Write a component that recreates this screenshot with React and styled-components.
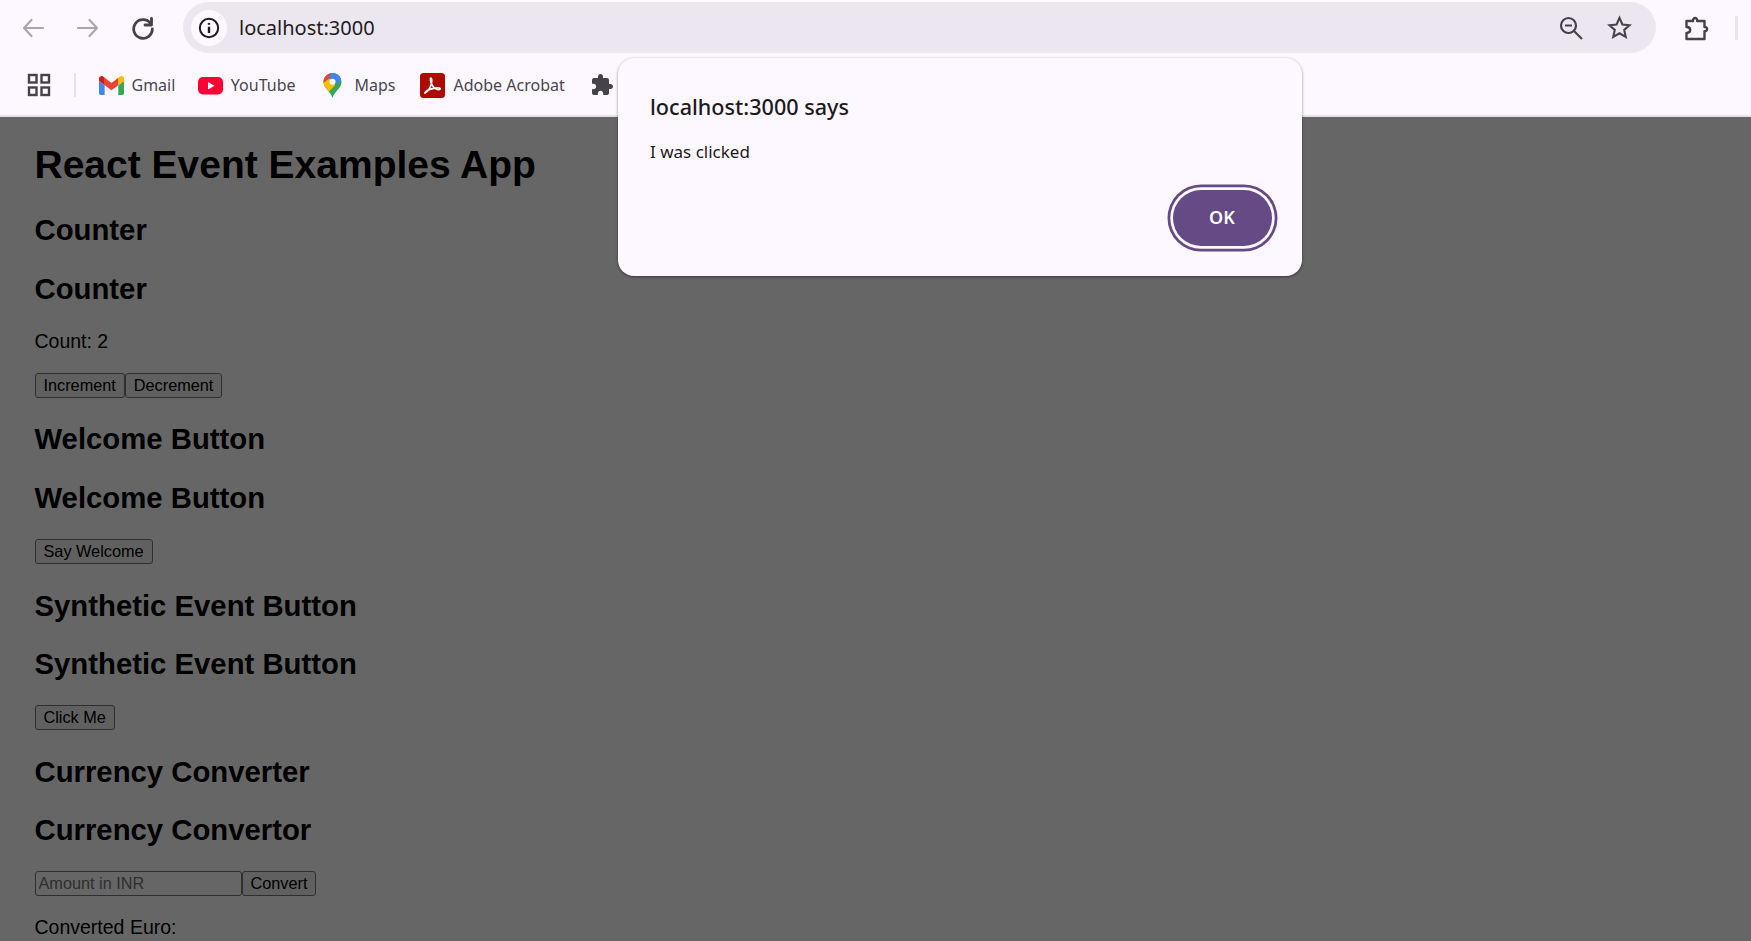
import styled, { createGlobalStyle } from "styled-components";

const GlobalStyle = createGlobalStyle`
  html, body {
    margin: 0;
    height: 100%;
    overflow: hidden;
    background: #fff;
  }
  #root {
    height: 100%;
  }
`;

const Wrap = styled.div`
  position: relative;
  height: 941px;
  display: flex;
  flex-direction: column;
  overflow: hidden;
`;

const Chrome = styled.header`
  height: 115px;
  flex-shrink: 0;
  background: #fdf8ff;
  border-bottom: 2px solid #e5e0e9;
  font-family: "Noto Sans", sans-serif;
  color: #46424c;
`;

const Toolbar = styled.div`
  height: 55px;
  display: flex;
  align-items: flex-start;
  padding-top: 2px;
  box-sizing: border-box;
`;

const NavGroup = styled.div`
  width: 183px;
  height: 51px;
  flex-shrink: 0;
  display: flex;
  align-items: center;
  gap: 25px;
  padding-left: 18px;
  box-sizing: border-box;
`;

const NavIcon = styled.svg`
  width: 30px;
  height: 30px;
  flex-shrink: 0;
  color: ${(p) => (p.$off ? "#a9a5ae" : "#46424c")};
`;

const AddressBar = styled.div`
  width: 1473px;
  height: 51px;
  flex-shrink: 0;
  display: flex;
  align-items: center;
  padding: 0 24px 0 8px;
  box-sizing: border-box;
  background: #ece6f0;
  border-radius: 26px;
`;

const InfoBadge = styled.div`
  width: 36px;
  height: 36px;
  border-radius: 50%;
  background: #fdf8ff;
  display: flex;
  align-items: center;
  justify-content: center;
  flex-shrink: 0;
`;

const Url = styled.span`
  margin-left: 12px;
  font-size: 20px;
  color: #1d1b20;
  flex: 1;
`;

const BarIcons = styled.div`
  display: flex;
  align-items: center;
  gap: 24px;
`;

const ToolbarEnd = styled.div`
  display: flex;
  align-items: center;
  height: 51px;
  padding-left: 28px;
`;

const ProfileLine = styled.div`
  width: 3px;
  height: 24px;
  margin-left: 25px;
  background: #eae1fb;
`;

const BookmarkBar = styled.nav`
  height: 60px;
  display: flex;
  align-items: center;
  padding-left: 27px;
  gap: 23px;
`;

const AppsDivider = styled.div`
  width: 2px;
  height: 24px;
  background: #e6dff3;
`;

const Bookmark = styled.div`
  display: flex;
  align-items: center;
  gap: ${(p) => p.$gap || "7.5px"};
  padding-right: ${(p) => p.$pad || "0"};
  font-size: 16px;
  color: #4a4650;
  white-space: nowrap;
`;

const BookmarkIcon = styled.svg`
  width: 25px;
  height: 25px;
  flex-shrink: 0;
`;

const Page = styled.main`
  position: relative;
  flex: 1;
  padding: 25px 0 0 34.5px;
  overflow: hidden;
  font-family: "Liberation Sans", Arial, sans-serif;
  color: #000;
`;

const Scrim = styled.div`
  position: absolute;
  inset: 0;
  background: rgba(0, 0, 0, 0.6);
`;

const Title = styled.h1`
  margin: 0 0 26.3px;
  font-size: 39px;
  line-height: 45px;
  font-weight: 700;
`;

const Heading = styled.h2`
  margin: 0 0 24.8px;
  font-size: 29.3px;
  font-weight: 700;
  line-height: 33.5px;
`;

const Text = styled.p`
  margin: 0 0 20px;
  font-size: 19.5px;
  line-height: 23px;
`;

const Row = styled.div`
  display: flex;
  margin-bottom: ${(p) => p.$gap || "24.6px"};
`;

const Button = styled.button`
  height: 25px;
  padding: 0 8px;
  font-family: "Liberation Sans", Arial, sans-serif;
  font-size: 16.27px;
  color: #000;
  background: #efefef;
  border: 1px solid #767676;
  border-radius: 3px;
`;

const AmountInput = styled.input`
  width: 207px;
  height: 25px;
  padding: 0 3px;
  box-sizing: border-box;
  font-family: "Liberation Sans", Arial, sans-serif;
  font-size: 16.27px;
  background: #fff;
  border: 1px solid #767676;
  border-radius: 3px;
  &::placeholder {
    color: #757575;
  }
`;

const Dialog = styled.div`
  position: absolute;
  left: 618px;
  top: 58px;
  width: 684px;
  height: 218px;
  box-sizing: border-box;
  padding: 35px 25px 25px 32px;
  display: flex;
  flex-direction: column;
  background: #fdf8ff;
  border-radius: 16px;
  box-shadow: 0 1px 3px rgba(0, 0, 0, 0.45);
  font-family: "Noto Sans", sans-serif;
  color: #1d1b20;
`;

const DialogTitle = styled.div`
  font-size: 21.6px;
  font-weight: 500;
  line-height: 28px;
`;

const DialogText = styled.div`
  margin-top: 19px;
  font-size: 17px;
  line-height: 24px;
`;

const DialogActions = styled.div`
  margin-top: auto;
  display: flex;
  justify-content: flex-end;
`;

const OkButton = styled.button`
  width: 99px;
  height: 56px;
  margin: 5.5px;
  padding: 0 0 2px;
  border: none;
  border-radius: 28px;
  background: #654a86;
  color: #fff;
  font-family: "Noto Sans", sans-serif;
  font-size: 18px;
  font-weight: 600;
  box-shadow: 0 0 0 2.75px #fdf8ff, 0 0 0 5.5px #654a86;
`;

const Stroke = { fill: "none", stroke: "currentColor", strokeWidth: 2.2, strokeLinecap: "round", strokeLinejoin: "round" };

const Gmail = () => (
  <BookmarkIcon viewBox="0 -3 24 24">
    <path fill="#4285F4" d="M1.6 18h3.8V8.7L0 4.6v11.8C0 17.3.7 18 1.6 18z" />
    <path fill="#34A853" d="M18.5 18h3.8c.9 0 1.7-.7 1.7-1.6V4.6l-5.5 4.1z" />
    <path fill="#FBBC04" d="M18.5 1.6v7.1L24 4.6V2.4c0-2-2.3-3.2-3.9-2z" />
    <path fill="#EA4335" d="M5.5 8.7V1.6L12 6.5l6.5-4.9v7.1L12 13.6z" />
    <path fill="#C5221F" d="M0 2.4v2.2l5.5 4.1V1.6L3.9.4C2.3-.8 0 .4 0 2.4z" />
  </BookmarkIcon>
);

const YouTube = () => (
  <BookmarkIcon viewBox="0 0 25 25">
    <rect x="0" y="4" width="25" height="17.5" rx="5" fill="#ff0033" />
    <path fill="#fff" d="M10 9l6.5 3.7L10 16.5z" />
  </BookmarkIcon>
);

const Maps = () => (
  <BookmarkIcon viewBox="0 0 25 25">
    <defs>
      <clipPath id="maps-pin">
        <path d="M12.5 0C7.5 0 3.5 4 3.5 9c0 6.5 7 9 9 16 2-7 9-9.500 9-16 0-5-4-9-9-9z" />
      </clipPath>
    </defs>
    <g clipPath="url(#maps-pin)">
      <rect width="25" height="25" fill="#34a853" />
      <polygon fill="#fbbc04" points="3,10 9,5.500 15.500,12 8,19.500 3,19.500" />
      <polygon fill="#ea4335" points="3,0 11,0 9,5.500 3,10" />
      <polygon fill="#4285f4" points="11,0 22,0 22,6 15.500,12 9,5.500" />
    </g>
    <circle cx="12.500" cy="8.800" r="3" fill="#fff" />
  </BookmarkIcon>
);

const Acrobat = () => (
  <BookmarkIcon viewBox="0 0 25 25">
    <rect width="25" height="25" rx="3.500" fill="#ad0b00" />
    <path
      fill="none"
      stroke="#fff"
      strokeWidth="1.600"
      strokeLinejoin="round"
      d="M5 20c3-1.500 5.500-6 6.500-10 .4-1.800.5-5-.6-5-1 0-.5 3.500 1 6.500 1.500 3 3.500 4.500 5.500 5 1.500.3 3 0 2.700-.9-.3-.9-3-.9-6.500-.2-3.500.7-6.700 2-8 3.500-.7.8-1 1.400-.6 1.100z"
    />
  </BookmarkIcon>
);

export default function App() {
  return (
    <Wrap>
      <GlobalStyle />
      <Chrome>
        <Toolbar>
          <NavGroup>
            <NavIcon $off viewBox="0 0 30 30" {...Stroke}>
              <path d="M25 15H6M13.500 7L6 15l7.500 8" />
            </NavIcon>
            <NavIcon $off viewBox="0 0 30 30" {...Stroke}>
              <path d="M5 15h19M16.500 7l7.500 8-7.500 8" />
            </NavIcon>
            <NavIcon viewBox="0 0 30 30" {...Stroke} strokeWidth="2.800">
              <path d="M22.500 10.500A9.300 9.300 0 1 0 24.300 16" />
              <path d="M23.500 5.500v6.500H17" />
            </NavIcon>
          </NavGroup>
          <AddressBar>
            <InfoBadge>
              <svg width="22" height="22" viewBox="0 0 24 24" fill="none" stroke="#1d1b20" strokeWidth="2.200">
                <circle cx="12" cy="12" r="10" />
                <path d="M12 10.500v7M12 6.500v2" strokeWidth="2.600" />
              </svg>
            </InfoBadge>
            <Url>localhost:3000</Url>
            <BarIcons>
              <svg width="24" height="24" viewBox="0 0 24 24" fill="none" stroke="#46424c" strokeWidth="2.200">
                <circle cx="9.500" cy="9.500" r="7.500" />
                <path d="M15 15l8 8M6 9.500h7" />
              </svg>
              <svg width="25" height="25" viewBox="0 0 24 24" fill="none" stroke="#46424c" strokeWidth="2" strokeLinejoin="miter">
                <path d="M12 2.800l2.800 6.300 6.800.7-5.100 4.500 1.500 6.700-6-3.500-6 3.500 1.500-6.700-5.100-4.500 6.800-.7z" />
              </svg>
            </BarIcons>
          </AddressBar>
          <ToolbarEnd>
            <svg width="26" height="26" viewBox="0 0 26 26" fill="none" stroke="#46424c" strokeWidth="2.400" strokeLinejoin="round">
              <path d="M2.500 6h6.500c-.4-4 4.600-4 4.200 0h7.300v6c3.500-.4 3.500 4.600 0 4.200V24H2.500v-6c3-.3 3.700-1.200 3.700-3s-1-3-3.700-3z" />
            </svg>
            <ProfileLine />
          </ToolbarEnd>
        </Toolbar>
        <BookmarkBar>
          <svg width="24" height="24" viewBox="0 0 24 24" fill="none" stroke="#46424c" strokeWidth="2.400">
            <rect x="2" y="2" width="7.500" height="7.500" />
            <rect x="14.500" y="2" width="7.500" height="7.500" />
            <rect x="2" y="14.500" width="7.500" height="7.500" />
            <rect x="14.500" y="14.500" width="7.500" height="7.500" />
          </svg>
          <AppsDivider />
          <Bookmark>
            <Gmail />
            Gmail
          </Bookmark>
          <Bookmark $pad="1px">
            <YouTube />
            YouTube
          </Bookmark>
          <Bookmark $gap="10px" $pad="1px">
            <Maps />
            Maps
          </Bookmark>
          <Bookmark $gap="9px" $pad="2px">
            <Acrobat />
            Adobe Acrobat
          </Bookmark>
          <svg width="24" height="24" viewBox="0 0 24 24" fill="#46424c">
            <path d="M20.500 11H19V7c0-1.100-.9-2-2-2h-4V3.500C13 2.120 11.880 1 10.500 1S8 2.120 8 3.500V5H4c-1.100 0-1.990.9-1.990 2v3.800H3.500c1.490 0 2.700 1.210 2.700 2.700s-1.210 2.700-2.700 2.700H2V20c0 1.100.9 2 2 2h3.800v-1.500c0-1.490 1.210-2.700 2.700-2.700 1.490 0 2.700 1.210 2.700 2.700V22H17c1.100 0 2-.9 2-2v-4h1.500c1.380 0 2.500-1.120 2.500-2.500S21.880 11 20.500 11z" />
          </svg>
        </BookmarkBar>
      </Chrome>

      <Page>
        <Title>React Event Examples App</Title>
        <Heading>Counter</Heading>
        <Heading>Counter</Heading>
        <Text>Count: 2</Text>
        <Row>
          <Button>Increment</Button>
          <Button>Decrement</Button>
        </Row>
        <Heading>Welcome Button</Heading>
        <Heading>Welcome Button</Heading>
        <Row>
          <Button>Say Welcome</Button>
        </Row>
        <Heading>Synthetic Event Button</Heading>
        <Heading>Synthetic Event Button</Heading>
        <Row>
          <Button>Click Me</Button>
        </Row>
        <Heading>Currency Converter</Heading>
        <Heading>Currency Convertor</Heading>
        <Row $gap="19.5px">
          <AmountInput placeholder="Amount in INR" />
          <Button>Convert</Button>
        </Row>
        <Text>Converted Euro:</Text>
        <Scrim />
      </Page>

      <Dialog>
        <DialogTitle>localhost:3000 says</DialogTitle>
        <DialogText>I was clicked</DialogText>
        <DialogActions>
          <OkButton>OK</OkButton>
        </DialogActions>
      </Dialog>
    </Wrap>
  );
}
